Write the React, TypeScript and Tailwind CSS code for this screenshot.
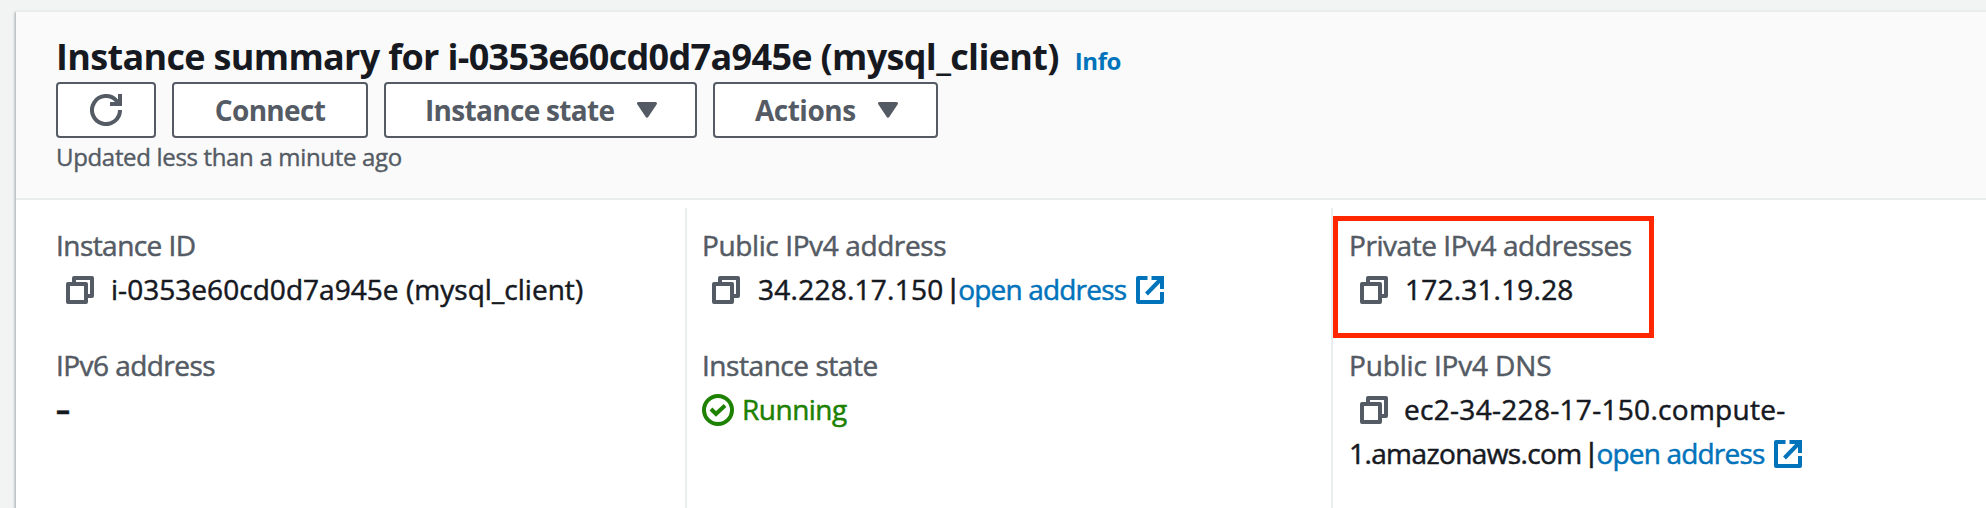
import type { ReactNode } from "react";

function CopyIcon() {
  return (
    <svg viewBox="0 0 28 28" className="mt-[2px] h-7 w-7 shrink-0" fill="none" stroke="#545b64" strokeWidth="4" strokeLinejoin="round">
      <path d="M2 8h18v18H2z" />
      <path d="M8 6V2h18v18h-4" />
    </svg>
  );
}

function ExternalIcon() {
  return (
    <svg viewBox="0 0 28 28" className="mt-[2px] ml-[10px] h-7 w-7 shrink-0" fill="none" stroke="#0073bb" strokeWidth="4">
      <path d="M11.5 2H2v24h24V16" strokeLinejoin="round" />
      <path d="M15.5 2H26v11" />
      <path d="M26 2L10.5 18" />
    </svg>
  );
}

function RefreshIcon() {
  return (
    <svg viewBox="0 0 32 32" className="h-8 w-8" fill="none" stroke="#545b64" strokeWidth="4">
      <path d="M30 16A14 14 0 1 1 26.5 6.8L29 10" />
      <path d="M20 10h10V0" />
    </svg>
  );
}

function CheckIcon() {
  return (
    <svg viewBox="0 0 32 32" className="mt-[2px] h-8 w-8 shrink-0" fill="none" stroke="#1d8102" strokeWidth="4">
      <circle cx="16" cy="16" r="14" />
      <path d="M9 15l5 5 9-8.500" />
    </svg>
  );
}

function Caret() {
  return (
    <svg viewBox="0 0 20 16" className="h-4 w-5 shrink-0" fill="#545b64" stroke="#545b64" strokeWidth="3" strokeLinejoin="round">
      <path d="M1.500 1.500h17L10 14.200z" />
    </svg>
  );
}

function Button({ children, className }: { children: ReactNode; className: string }) {
  return (
    <button className={`flex h-14 items-center rounded-[4px] border-2 border-[#545b64] bg-white text-[28px] leading-[52px] font-bold whitespace-nowrap text-[#545b64] ${className}`}>
      {children}
    </button>
  );
}

function Label({ children, className }: { children: ReactNode; className: string }) {
  return <div className={`text-[#545b64] ${className}`}>{children}</div>;
}

function Value({ children, className = "" }: { children: ReactNode; className?: string }) {
  return <div className={`flex h-11 items-center text-[#16191f] ${className}`}>{children}</div>;
}

function OpenAddress() {
  return (
    <>
      <span className="ml-[6px] font-['Liberation_Sans',sans-serif]">|</span>
      <a className="ml-[1.500px] tracking-[-0.82px] text-[#0073bb]">open address</a>
      <ExternalIcon />
    </>
  );
}

export default function App() {
  return (
    <div className="h-[508px] w-[1986px] overflow-hidden bg-[#f2f3f3] pt-[10px] pl-4 font-['Open_Sans',sans-serif]">
      <section className="flex h-[498px] flex-col border-t-2 border-[#eaeded] bg-white shadow-[-2px_2px_2px_0_rgba(0,28,36,0.15),0_2px_2px_0_rgba(0,28,36,0.3)]">
        <header className="h-[188px] shrink-0 border-b-2 border-[#eaeded] bg-[#fafafa] pt-5 pl-10">
          <div className="flex h-[50px] items-baseline whitespace-nowrap">
            <h1 className="text-[36px] leading-[50px] font-bold tracking-[-0.68px] text-[#16191f]">
              Instance summary for i-0353e60cd0d7a945e (mysql_client)
            </h1>
            <a className="ml-[16px] text-[24px] leading-[38px] font-bold tracking-[-0.4px] text-[#0073bb]">Info</a>
          </div>
          <div className="flex gap-4">
            <Button className="w-[100px] justify-center">
              <RefreshIcon />
            </Button>
            <Button className="w-[196px] justify-center tracking-[-0.67px]">Connect</Button>
            <Button className="w-[313px] justify-between pr-[38px] pl-[39px] tracking-[-0.69px]">
              Instance state
              <Caret />
            </Button>
            <Button className="w-[225px] justify-between pr-[38px] pl-10 tracking-[-0.5px]">
              Actions
              <Caret />
            </Button>
          </div>
          <p className="text-[24px] leading-[38px] tracking-[-0.33px] text-[#545b64] [-webkit-text-stroke:0.4px_currentColor]">
            Updated less than a minute ago
          </p>
        </header>

        <div className="flex grow pt-2 pl-10 text-[28px] leading-[44px] whitespace-nowrap [-webkit-text-stroke:0.5px_currentColor]">
          <div className="flex w-[629px] flex-col gap-8 pt-[15px]">
            <div>
              <Label className="tracking-[-0.55px]">Instance ID</Label>
              <Value className="pl-[10px]">
                <CopyIcon />
                <span className="ml-[17px] tracking-[0.04px]">i-0353e60cd0d7a945e (mysql_client)</span>
              </Value>
            </div>
            <div>
              <Label className="tracking-[-0.55px]">IPv6 address</Label>
              <Value>
                <span className="font-bold">–</span>
              </Value>
            </div>
          </div>

          <div className="flex w-[646px] flex-col gap-8 border-l-2 border-[#eaeded] pt-[15px] pl-[15px]">
            <div>
              <Label className="tracking-[-0.39px]">Public IPv4 address</Label>
              <Value className="pl-[10px]">
                <CopyIcon />
                <span className="ml-[18px] tracking-[0.25px]">34.228.17.150</span>
                <OpenAddress />
              </Value>
            </div>
            <div>
              <Label className="tracking-[-0.45px]">Instance state</Label>
              <Value>
                <CheckIcon />
                <span className="ml-2 tracking-[-0.5px] text-[#1d8102]">Running</span>
              </Value>
            </div>
          </div>

          <div className="relative flex grow flex-col gap-8 border-l-2 border-[#eaeded] pt-[15px] pl-4">
            <div>
              <Label className="tracking-[-0.45px]">Private IPv4 addresses</Label>
              <Value className="pl-[11px]">
                <CopyIcon />
                <span className="ml-[17px] tracking-[0.2px]">172.31.19.28</span>
              </Value>
            </div>
            <div>
              <Label className="tracking-[-0.15px]">Public IPv4 DNS</Label>
              <Value className="pl-[11px]">
                <CopyIcon />
                <span className="ml-4 tracking-[0.3px]">ec2-34-228-17-150.compute-</span>
              </Value>
              <Value>
                <span className="tracking-[-0.6px]">1.amazonaws.com</span>
                <OpenAddress />
              </Value>
            </div>
            <div className="absolute top-2 left-0 h-[122px] w-[321px] border-5 border-[#ff2600]" />
          </div>
        </div>
      </section>
    </div>
  );
}
